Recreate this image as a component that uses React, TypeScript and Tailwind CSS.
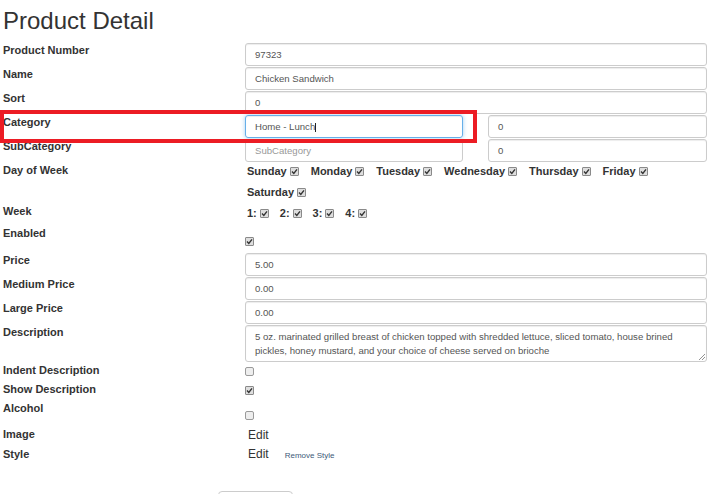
import React from "react";

const font = { fontFamily: '"Liberation Sans", Arial, sans-serif' };

function Check({ checked }: { checked: boolean }) {
  return checked ? (
    <span className="inline-flex w-[9px] h-[9px] border border-[#8a8a8a] bg-[#dedede] rounded-[1px] items-center justify-center shrink-0">
      <svg width="7" height="7" viewBox="0 0 7 7">
        <path d="M1 3.6 L2.8 5.4 L6 1.4" stroke="#333" strokeWidth="1.4" fill="none" />
      </svg>
    </span>
  ) : (
    <span className="inline-block w-[9px] h-[9px] border border-[#9a9a9a] bg-[#eeeeee] rounded-[2px] shrink-0" />
  );
}

function Label({ children, className = "" }: { children: React.ReactNode; className?: string }) {
  return (
    <div className={`w-[245px] shrink-0 pl-[3px] text-[11px] leading-[15px] font-bold text-[#333] ${className}`}>
      {children}
    </div>
  );
}

function Input({ value, placeholder, className = "", focused = false }: { value?: string; placeholder?: string; className?: string; focused?: boolean }) {
  return (
    <div
      className={`h-[23px] rounded-[3px] border px-[9px] pt-[1px] flex items-center text-[9.6px] leading-[12px] ${
        focused
          ? "border-[#66afe9] shadow-[inset_0_1px_1px_rgba(0,0,0,0.075),0_0_4px_rgba(102,175,233,0.6)]"
          : "border-[#cccccc] shadow-[inset_0_1px_1px_rgba(0,0,0,0.075)]"
      } ${className}`}
    >
      {value !== undefined ? (
        <span className="text-[#555]">{value}</span>
      ) : (
        <span className="text-[#999]">{placeholder}</span>
      )}
      {focused && <span className="inline-block w-px h-[9px] bg-[#222]" />}
    </div>
  );
}

function InputRow({ label, value }: { label: string; value: string }) {
  return (
    <div className="flex h-[24px]">
      <Label>{label}</Label>
      <Input value={value} className="w-[462px]" />
    </div>
  );
}

function CheckRow({ label, checked, h, pt }: { label: string; checked: boolean; h: string; pt: string }) {
  return (
    <div className={`flex ${h}`}>
      <Label>{label}</Label>
      <div className={`flex items-start ${pt}`}>
        <Check checked={checked} />
      </div>
    </div>
  );
}

export default function App() {
  const days = ["Sunday", "Monday", "Tuesday", "Wednesday", "Thursday", "Friday", "Saturday"];
  return (
    <div className="relative w-[719px] h-[494px] overflow-hidden bg-white text-[#333]" style={font}>
      <div className="h-[43px] pt-[8px] pl-[3px] text-[24px] leading-[26px] text-[#333]">Product Detail</div>

      <InputRow label="Product Number" value="97323" />
      <InputRow label="Name" value="Chicken Sandwich" />
      <InputRow label="Sort" value="0" />

      <div className="flex h-[24px]">
        <Label>Category</Label>
        <Input value="Home - Lunch" focused className="w-[218px]" />
        <Input value="0" className="w-[219px] ml-[25px]" />
      </div>
      <div className="flex h-[24px]">
        <Label>SubCategory</Label>
        <Input placeholder="SubCategory" className="w-[218px]" />
        <Input value="0" className="w-[219px] ml-[25px]" />
      </div>

      <div className="flex h-[41px]">
        <Label>Day of Week</Label>
        <div className="w-[462px] pl-[2px] flex flex-wrap items-start gap-x-[12px] gap-y-[4px] content-start text-[11px] leading-[17px] font-bold">
          {days.map((d) => (
            <span key={d} className="inline-flex items-center gap-[3px] h-[17px]">
              {d}
              <Check checked />
            </span>
          ))}
        </div>
      </div>

      <div className="flex h-[22px]">
        <Label>Week</Label>
        <div className="pl-[2px] pt-px flex items-start gap-x-[11px] text-[11px] leading-[17px] font-bold">
          {["1:", "2:", "3:", "4:"].map((w) => (
            <span key={w} className="inline-flex items-center gap-[3px] h-[17px]">
              {w}
              <Check checked />
            </span>
          ))}
        </div>
      </div>

      <CheckRow label="Enabled" checked h="h-[27px]" pt="pt-[11px]" />

      <InputRow label="Price" value="5.00" />
      <InputRow label="Medium Price" value="0.00" />
      <InputRow label="Large Price" value="0.00" />

      <div className="flex h-[38px]">
        <Label>Description</Label>
        <div className="relative w-[462px] h-[37px] rounded-[3px] border border-[#cccccc] shadow-[inset_0_1px_1px_rgba(0,0,0,0.075)] px-[9px] pt-[4px] text-[9.6px] leading-[14px] text-[#555]">
          <div>5 oz. marinated grilled breast of chicken topped with shredded lettuce, sliced tomato, house brined</div>
          <div>pickles, honey mustard, and your choice of cheese served on brioche</div>
          <svg className="absolute right-[1px] bottom-[1px]" width="7" height="7" viewBox="0 0 7 7">
            <path d="M1 7 L7 1 M4 7 L7 4" stroke="#777" strokeWidth="0.8" />
          </svg>
        </div>
      </div>

      <CheckRow label="Indent Description" checked={false} h="h-[19px]" pt="pt-[4px]" />
      <CheckRow label="Show Description" checked h="h-[19px]" pt="pt-[4px]" />
      <CheckRow label="Alcohol" checked={false} h="h-[26px]" pt="pt-[10px]" />

      <div className="flex h-[20px]">
        <Label>Image</Label>
        <div className="pl-[3px] pt-px text-[12px] leading-[15px] text-[#333]">Edit</div>
      </div>
      <div className="flex h-[20px]">
        <Label>Style</Label>
        <div className="pl-[3px] flex items-baseline text-[#333]">
          <span className="text-[12px] leading-[15px]">Edit</span>
          <span className="ml-[16px] text-[8px] text-[#3d5a78]">Remove Style</span>
        </div>
      </div>

      <div className="mt-[24px] ml-[218px] w-[75px] h-[30px] rounded-[4px] border border-[#cccccc] bg-white" />

      <div className="absolute left-0 top-[110px] w-[477px] h-[33px] border-[4px] border-[#ec1c24] pointer-events-none" />
    </div>
  );
}
